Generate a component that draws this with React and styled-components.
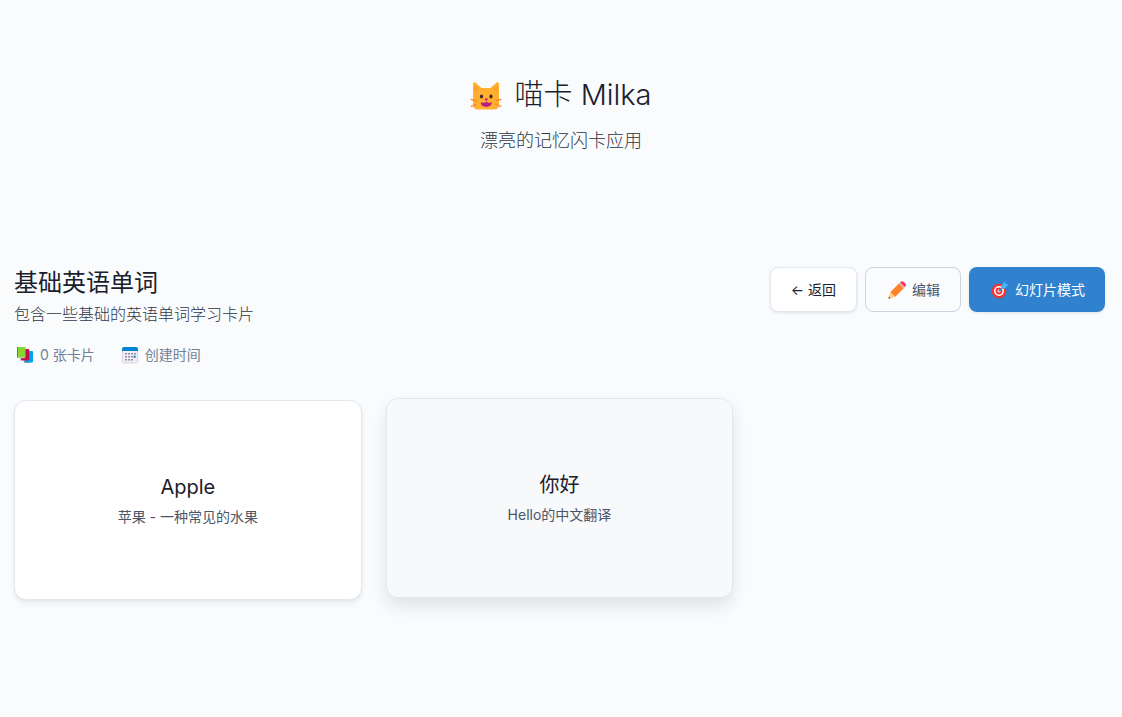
import React from 'react';
import styled, { createGlobalStyle } from 'styled-components';

const deck = {
	title: '基础英语单词',
	description: '包含一些基础的英语单词学习卡片',
	count: 0,
};

const cards = [
	{ id: 1, front: 'Apple', back: '苹果 - 一种常见的水果', lifted: false },
	{ id: 2, front: '你好', back: 'Hello的中文翻译', lifted: true },
];

const CatIcon = () => (
	<svg width="32" height="32" viewBox="0 0 32 32" aria-hidden="true">
		<path d="M3 5c0-1.500 1.500-2.200 2.600-1.200L11.500 9h9l5.900-5.200C27.500 2.800 29 3.500 29 5v20.500c0 3-2 5-5 5H8c-3 0-5-2-5-5z" fill="#ffb02e" />
		<path d="M4.500 6.500v6.500L9 9.500zM27.500 6.500v6.500L23 9.500z" fill="#ff9a2e" />
		<ellipse cx="11.500" cy="17.500" rx="1.600" ry="2" fill="#402a32" />
		<ellipse cx="21" cy="17.500" rx="1.600" ry="2" fill="#402a32" />
		<path d="M14.900 20h2.800l-1.400 1.500z" fill="#f70a8d" stroke="#f70a8d" strokeLinejoin="round" />
		<path d="M10.800 23.300c2 .8 4 .7 5.500-.8 1.500 1.500 3.500 1.600 5.500.8 0 3-2.200 4.600-5.500 4.600s-5.500-1.600-5.500-4.600z" fill="#bb1d80" />
		<path d="M1.200 20.500l5 1.300M1.200 27.300l5-1.800M30.800 20.500l-5 1.300M30.800 27.300l-5-1.800" stroke="#ff822d" strokeWidth="1.300" strokeLinecap="round" />
	</svg>
);

const CardsIcon = () => (
	<svg width="22" height="22" viewBox="-1 -1 22 22" aria-hidden="true">
		<path d="M9 15h6v3H9z" fill="#a9a9a9" />
		<rect x="9.500" y="6" width="8.500" height="11.500" rx=".8" fill="#00a6ed" />
		<path d="M5 13h5v2.500H5z" fill="#d9c9d5" />
		<rect x="6" y="4" width="8.200" height="11.500" rx=".8" fill="#ca0b4a" />
		<rect x="2" y="2" width="8.500" height="10.500" rx=".6" fill="#86d72f" />
		<path d="M2 2h.9v10.500H2z" fill="#44911b" />
		<path d="M2.900 12h7v1.200h-7z" fill="#b8c9ac" />
	</svg>
);

const CalendarIcon = () => (
	<svg width="22" height="22" viewBox="-1 -1 22 22" aria-hidden="true">
		<path d="M2.300 5h15.400v11a2 2 0 0 1-2 2H4.300a2 2 0 0 1-2-2z" fill="#f0ebf5" stroke="#cdc4d6" strokeWidth=".7" />
		<path d="M2 6V4a2 2 0 0 1 2-2h12a2 2 0 0 1 2 2v2z" fill="#0084ce" />
		<g fill="#998ea4">
			<path d="M5 8h2v1.500H5zM8 8h2v1.500H8zM11 8h2v1.500h-2zM14 8h2v1.500h-2z" />
			<path d="M5 11h2v1.500H5zM8 11h2v1.500H8zM11 11h2v1.500h-2z" />
			<path d="M5 14h2v1.500H5zM8 14h2v1.500H8zM11 14h2v1.500h-2z" />
		</g>
		<path d="M13.700 10.700h2v2h-2z" fill="#0084ce" />
	</svg>
);

const PencilIcon = () => (
	<svg width="22" height="22" viewBox="-1 -1 22 22" aria-hidden="true">
		<path d="M3.300 12.200L12.200 3.300l4.700 4.700-8.900 8.900z" fill="#ff822d" />
		<path d="M3.300 12.200L8 16.900l-5.300 1.700c-.8.200-1.300-.4-1.100-1.100z" fill="#ffce7c" />
		<path d="M1.900 16.600l1.700 1.700-.9.300c-.8.200-1.300-.4-1.100-1.100z" fill="#7d4533" />
		<path d="M12 3.500l1.300-1.300L18 6.900l-1.300 1.300z" fill="#d3bfc8" />
		<path d="M13.100 2.400l.6-.6c.9-.9 2-.9 2.900 0l1.800 1.800c.9.900.9 2 0 2.900l-.6.600z" fill="#fc3164" />
	</svg>
);

const TargetIcon = () => (
	<svg width="22" height="22" viewBox="-1 -1 22 22" aria-hidden="true">
		<circle cx="9" cy="11" r="7.300" fill="#f8312f" />
		<circle cx="9" cy="11" r="5" fill="#fff" />
		<circle cx="9" cy="11" r="3.400" fill="#f8312f" />
		<circle cx="9" cy="11" r="1.500" fill="#fff" />
		<path d="M9 11l5-5" stroke="#1b8fe0" strokeWidth="1.200" strokeLinecap="round" />
		<path d="M11.300 5.500l3.900-3.900.8 2.400 2.400.8-3.900 3.900-3.200-.1z" fill="#46b4fb" />
	</svg>
);

const App = () => {
	return (
		<>
			<GlobalStyle />
			<Header>
				<Logo>
					<CatIcon />
					喵卡 Milka
				</Logo>
				<Subtitle>漂亮的记忆闪卡应用</Subtitle>
			</Header>
			<Main>
				<DeckHeader>
					<div>
						<DeckTitle>{deck.title}</DeckTitle>
						<DeckDescription>{deck.description}</DeckDescription>
						<DeckMeta>
							<MetaItem><CardsIcon />{deck.count} 张卡片</MetaItem>
							<MetaItem><CalendarIcon />创建时间</MetaItem>
						</DeckMeta>
					</div>
					<Actions>
						<Button type="button">← 返回</Button>
						<Button type="button" $variant="outline"><PencilIcon />编辑</Button>
						<Button type="button" $variant="primary"><TargetIcon />幻灯片模式</Button>
					</Actions>
				</DeckHeader>
				<CardGrid>
					{cards.map((card) => (
						<Card key={card.id} $lifted={card.lifted}>
							<CardFront>{card.front}</CardFront>
							<CardBack>{card.back}</CardBack>
						</Card>
					))}
				</CardGrid>
			</Main>
		</>
	);
};

const GlobalStyle = createGlobalStyle`
	* {
		box-sizing: border-box;
		margin: 0;
		padding: 0;
	}

	body {
		background: #fafbfd;
		color: #1a202c;
		font-family: Inter, "Noto Sans CJK SC", sans-serif;
		font-size: 14px;
		font-weight: 400;
	}

	svg {
		flex: none;
	}
`;

const Header = styled.header`
	padding: 72px 16px 0;
	text-align: center;
`;

const Logo = styled.h1`
	display: flex;
	align-items: center;
	justify-content: center;
	gap: 12px;
	font-size: 29px;
	font-weight: 300;
	line-height: 46px;
`;

const Subtitle = styled.p`
	margin-top: 8px;
	font-size: 18px;
	font-weight: 300;
	line-height: 30px;
	color: #2d3748;
`;

const Main = styled.main`
	padding: 111px 17px 48px 14px;
`;

const DeckHeader = styled.section`
	display: flex;
	align-items: flex-start;
	justify-content: space-between;
	margin-bottom: 31px;
`;

const DeckTitle = styled.h2`
	font-size: 24px;
	font-weight: 400;
	line-height: 32px;
`;

const DeckDescription = styled.p`
	font-size: 16px;
	font-weight: 300;
	line-height: 30px;
	color: #2d3748;
`;

const DeckMeta = styled.div`
	display: flex;
	gap: 24px;
	margin-top: 12px;
`;

const MetaItem = styled.span`
	display: flex;
	align-items: center;
	gap: 4px;
	line-height: 28px;
	color: #718096;
`;

const variants = {
	plain: `
		background: #fff;
		border: 1px solid #e2e8f0;
		color: #1a202c;
		box-shadow: 0 1px 3px rgba(0, 0, 0, 0.1);
	`,
	outline: `
		background: transparent;
		border: 1px solid #cbd5e0;
		color: #4a5568;
	`,
	primary: `
		background: #3182ce;
		border: none;
		color: #fff;
		box-shadow: 0 1px 3px rgba(0, 0, 0, 0.1);
	`,
};

const Actions = styled.div`
	display: flex;
	gap: 8px;
`;

const Button = styled.button`
	display: flex;
	align-items: center;
	gap: 4px;
	height: 45px;
	padding: 0 20px;
	border-radius: 8px;
	font-family: inherit;
	font-size: 14px;
	font-weight: 400;
	line-height: 21px;
	cursor: pointer;
	${({ $variant = 'plain' }) => variants[$variant]}
`;

const CardGrid = styled.section`
	display: grid;
	grid-template-columns: repeat(auto-fill, minmax(300px, 1fr));
	gap: 24px;
`;

const Card = styled.article`
	display: flex;
	flex-direction: column;
	align-items: center;
	justify-content: center;
	gap: 4px;
	height: 200px;
	padding: 24px;
	border: 1px solid #e2e8f0;
	border-radius: 12px;
	text-align: center;
	background: ${({ $lifted }) => ($lifted ? '#f7f9fb' : '#fff')};
	box-shadow: ${({ $lifted }) => ($lifted
		? '0 8px 16px rgba(0, 0, 0, 0.1)'
		: '0 4px 6px rgba(0, 0, 0, 0.05), 0 1px 3px rgba(0, 0, 0, 0.05)')};
	transform: ${({ $lifted }) => ($lifted ? 'translateY(-2px)' : 'none')};
`;

const CardFront = styled.h3`
	font-size: 20px;
	font-weight: 400;
	line-height: 30px;
`;

const CardBack = styled.p`
	line-height: 22px;
	color: #4a5568;
`;

export default App;
